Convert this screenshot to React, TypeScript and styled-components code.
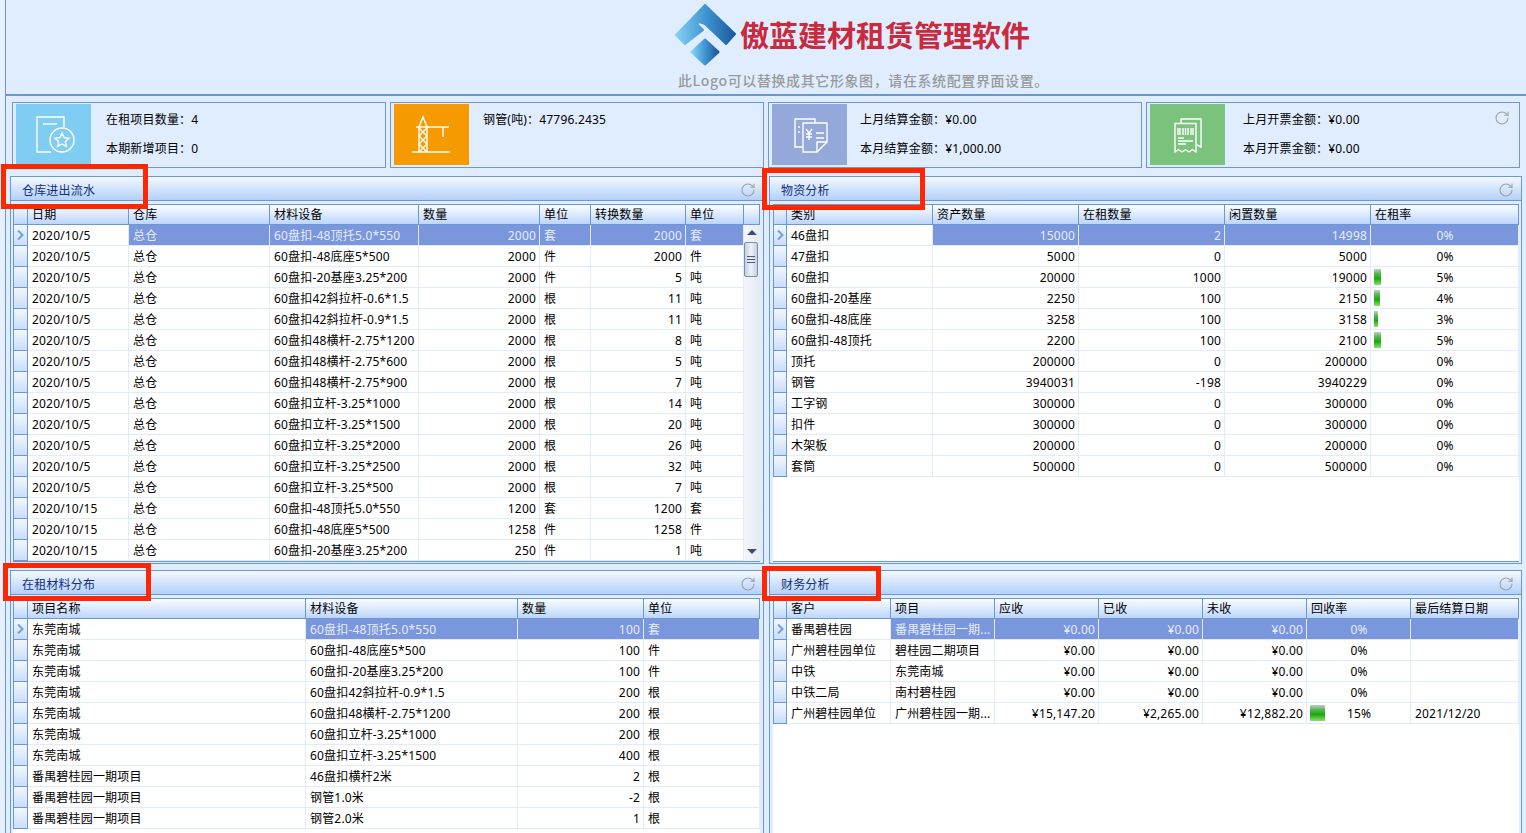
import styled, { createGlobalStyle } from "styled-components";
import { RotateCw } from "lucide-react";

const FONT = `"Noto Sans", "Noto Sans CJK SC", sans-serif`;
const LINE = "#6b97d4";
const CELL_LINE = "#e0ebff";

const Global = createGlobalStyle`
	html, body {
		margin: 0;
		height: 833px;
		overflow: hidden;
		background: #e6f0ff;
	}
	* { box-sizing: border-box; }
`;

const Page = styled.div`
	position: relative;
	width: 1526px;
	height: 833px;
	overflow: hidden;
	padding-left: 5px;
	font-family: ${FONT};
	font-size: 12px;
	letter-spacing: 0.18px;
	color: #000;
`;

const Main = styled.div`
	height: 100%;
	border-left: 1px solid ${LINE};
	background: #e0edff;
`;

const Header = styled.div`
	height: 96px;
	padding: 3px 0 0 668px;
	border-bottom: 2px solid ${LINE};
`;

const LogoRow = styled.div`
	display: flex;
	align-items: center;
	gap: 3px;
	height: 62px;
`;

const LogoMark = styled.svg`
	flex: none;
	margin-top: 2px;
`;

const LogoTitle = styled.div`
	font-family: "Noto Sans CJK SC", sans-serif;
	font-size: 29px;
	font-weight: 700;
	letter-spacing: 0;
	color: #c92a3e;
	white-space: nowrap;
`;

const LogoHint = styled.div`
	margin: 5px 0 0 4px;
	font-family: "Noto Sans CJK SC", sans-serif;
	font-size: 14px;
	font-weight: 500;
	line-height: 20px;
	letter-spacing: 0.6px;
	color: #999;
	white-space: nowrap;
`;

const Cards = styled.div`
	display: grid;
	grid-template-columns: repeat(4, 374px);
	gap: 4px;
	margin: 6px 0 8px 6px;
`;

const Card = styled.div`
	display: flex;
	height: 66px;
	padding: 1px 3px;
	border: 1px solid ${LINE};
`;

const CardIcon = styled.div<{ $bg: string }>`
	display: flex;
	flex: none;
	width: 75px;
	height: 61px;
	background: ${(p) => p.$bg};
`;

const CardText = styled.div<{ $gap: number }>`
	display: flex;
	flex-direction: column;
	gap: 15px;
	padding: 9px 0 0 ${(p) => p.$gap}px;
	line-height: 14px;
	white-space: nowrap;
`;

const CardRefresh = styled.div`
	margin: 6px 6px 0 auto;
	color: #a0a0a0;
`;

const Panels = styled.div`
	display: grid;
	grid-template-columns: 754px 753px;
	grid-template-rows: 388px 300px;
	column-gap: 5px;
	row-gap: 6px;
	margin-left: 4px;
`;

const Panel = styled.section<{ $inset: number }>`
	display: flex;
	flex-direction: column;
	min-height: 0;
	border: 1px solid ${LINE};
	padding-left: ${(p) => p.$inset}px;
`;

const PanelTitle = styled.div<{ $inset: number }>`
	display: flex;
	flex: none;
	align-items: center;
	justify-content: space-between;
	height: 24px;
	margin: 0 0 3px -${(p) => p.$inset}px;
	padding: 2px 7px 0 11px;
	background: linear-gradient(#f4f8ff, #b2d1fb);
	border-bottom: 1px solid ${LINE};
	color: #14307a;
`;

const RefreshBtn = styled.span`
	display: flex;
	color: #a0a0a0;
`;

const Grid = styled.div<{ $cols: string }>`
	--cols: ${(p) => p.$cols};
	flex: 1;
	align-self: flex-start;
	display: flex;
	flex-direction: column;
	min-height: 0;
	margin-bottom: 1px;
	overflow: hidden;
	background: #fff;
	border-bottom: 1px solid ${LINE};
`;

const HeadRow = styled.div`
	display: grid;
	flex: none;
	grid-template-columns: var(--cols);
	height: 21px;
	background: linear-gradient(#fbfdff, #bcd6fb);
	border: solid ${LINE};
	border-width: 1px 0 1px 1px;
`;

const HeadCell = styled.div`
	padding: 0 3px 0 4px;
	line-height: 19px;
	border-right: 1px solid ${LINE};
	white-space: nowrap;
	overflow: hidden;
`;

const Body = styled.div`
	display: flex;
	flex: 1;
	min-height: 0;
`;

const Rows = styled.div`
	flex: 1;
	min-width: 0;
`;

const Row = styled.div`
	display: grid;
	grid-template-columns: var(--cols);
	height: 21px;
	border-left: 1px solid ${LINE};
`;

const Indicator = styled.div`
	display: flex;
	align-items: center;
	justify-content: center;
	background: linear-gradient(#f2f7ff, #c9ddfb);
	border-right: 1px solid ${LINE};
	border-bottom: 1px solid ${LINE};
	color: #6f9fdf;
`;

const Cell = styled.div<{ $align?: string; $selected?: boolean }>`
	position: relative;
	padding: 1px 3px 0 4px;
	line-height: 20px;
	text-align: ${(p) => p.$align ?? "left"};
	white-space: nowrap;
	overflow: hidden;
	color: ${(p) => (p.$selected ? "#e6ecfb" : "#000")};
	background: ${(p) => (p.$selected ? "#7a96dc" : "#fff")};
	border-right: 1px solid ${CELL_LINE};
	border-bottom: 1px solid ${CELL_LINE};
`;

const Clipped = styled.span`
	display: block;
	overflow: hidden;
	white-space: nowrap;
	text-overflow: clip;
`;

const RateBar = styled.span<{ $pct: number }>`
	position: absolute;
	left: 3px;
	top: 2px;
	bottom: 2px;
	width: ${(p) => p.$pct}%;
	background: linear-gradient(#c4cfc4 0%, #58b858 28%, #1aa80e 60%, #8fe070 100%);
`;

const RateText = styled.span`
	position: relative;
`;

const Scroll = styled.div`
	display: flex;
	flex: none;
	flex-direction: column;
	align-items: center;
	width: 16px;
	height: 336px;
	margin-left: -16px;
	background: linear-gradient(90deg, #f4f6fa, #e6eaf2);
`;

const ScrollArrow = styled.div<{ $down?: boolean }>`
	flex: none;
	width: 0;
	height: 0;
	margin: 5px 0 7px;
	border-left: 5px solid transparent;
	border-right: 5px solid transparent;
	${(p) => (p.$down ? "border-top: 5px solid #3c4c70;" : "border-bottom: 5px solid #3c4c70;")}
`;

const ScrollThumb = styled.div`
	display: flex;
	flex: none;
	align-items: center;
	justify-content: center;
	width: 14px;
	height: 35px;
	margin-right: 2px;
	background: linear-gradient(90deg, #c4cfe0, #eef2f8 50%, #c4cfe0);
	border: 1px solid #7a8bb0;
	border-radius: 2px;
`;

const ThumbGrip = styled.div`
	width: 8px;
	height: 8px;
	background: repeating-linear-gradient(#4a5a80 0 1px, transparent 1px 3px);
`;

const ScrollSpace = styled.div`
	flex: 1;
`;

const RedBox = styled.div<{ $x: number; $y: number; $w: number; $h: number }>`
	position: absolute;
	left: ${(p) => p.$x}px;
	top: ${(p) => p.$y}px;
	width: ${(p) => p.$w}px;
	height: ${(p) => p.$h}px;
	border: 5px solid #ff2600;
	pointer-events: none;
`;

function Logo() {
	return (
		<LogoMark width="63" height="62" viewBox="0 0 63 62">
			<defs>
				<linearGradient id="logoA" x1="0" y1="0" x2="1" y2="0">
					<stop offset="0" stopColor="#84d0f6" />
					<stop offset="0.5" stopColor="#3f94d2" />
					<stop offset="1" stopColor="#1c5a9c" />
				</linearGradient>
			</defs>
			<path
				d="M31 1 L61 30 L52 40 L31 20 L25 18 L23 20 L29 26 L11 40 L2 31 Z"
				fill="url(#logoA)"
				stroke="url(#logoA)"
				strokeWidth="2"
				strokeLinejoin="round"
			/>
			<path
				d="M31 36 L44 48 L31 60 L18 48 Z"
				fill="url(#logoA)"
				stroke="url(#logoA)"
				strokeWidth="3"
				strokeLinejoin="round"
			/>
		</LogoMark>
	);
}

const white = { fill: "none", stroke: "#fff", strokeWidth: 1.4 };

function ProjectIcon() {
	return (
		<svg width="75" height="61" viewBox="0 0 75 61">
			<g {...white}>
				<path d="M35 48 H21 V13 H48 V23" />
				<path d="M27 20 H41" />
				<circle cx="46" cy="36" r="12" />
				<path d="M46 29 L48 33.6 L53 34.2 L49.3 37.6 L50.3 42.4 L46 40 L41.7 42.4 L42.7 37.6 L39 34.2 L44 33.6 Z" />
			</g>
		</svg>
	);
}

function CraneIcon() {
	return (
		<svg width="75" height="61" viewBox="0 0 75 61">
			<g {...white}>
				<path d="M18 48 H56" />
				<path d="M22 23 H55" />
				<path d="M49 23 V33" />
				<path d="M25 48 V23 L29 13 L33 23 V48" />
				<path d="M25 24 L33 32 L25 40 L33 48 M33 24 L25 32 L33 40 L25 48" />
			</g>
		</svg>
	);
}

function SettleIcon() {
	return (
		<svg width="75" height="61" viewBox="0 0 75 61">
			<g {...white}>
				<path d="M31 43 H23 V15 H43 V19" />
				<path d="M31 19 H55 V38 L45 48 H31 Z" />
				<path d="M45 48 V38 H55" />
				<path d="M44 29 H52 M44 34 H52" />
				<path d="M34 25 L37 29 L40 25 M37 29 V36 M34 30 H40 M34 33 H40" />
				<path d="M27 22 V24 M27 27 V29" />
			</g>
		</svg>
	);
}

function InvoiceIcon() {
	return (
		<svg width="75" height="61" viewBox="0 0 75 61">
			<g {...white}>
				<path d="M31 19 V15 H51 V43 L47 41" />
				<path d="M25 48 V19.5 H46 V48 L42.5 45.5 L39 48 L35.5 45.5 L32 48 L28.5 45.5 Z" />
				<path d="M28 24 V31 M30 24 V31 M33 24 V31 M35.5 24 V31 M38 24 V31 M41 24 V31 M43 24 V31" />
				<path d="M28 34 H34 M28 37 H43 M28 40 H36" />
			</g>
		</svg>
	);
}

function Chevron() {
	return (
		<svg width="7" height="10" viewBox="0 0 7 10">
			<path d="M1 0.5 L5.5 5 L1 9.5" fill="none" stroke="currentColor" strokeWidth="2" />
		</svg>
	);
}

type Col = { title: string; align?: string };
type Value = string | { pct: number; text: string };

function DataGrid(props: {
	cols: string;
	columns: Col[];
	rows: Value[][];
	filler?: boolean;
	scroll?: boolean;
}) {
	const { cols, columns, rows, filler, scroll } = props;
	return (
		<Grid $cols={cols}>
			<HeadRow>
				<HeadCell />
				{columns.map((c, i) => (
					<HeadCell key={i}>{c.title}</HeadCell>
				))}
				{filler && <HeadCell />}
			</HeadRow>
			<Body>
				<Rows>
					{rows.map((row, r) => (
						<Row key={r}>
							<Indicator>{r === 0 && <Chevron />}</Indicator>
							{row.map((v, c) => (
								<Cell key={c} $align={columns[c].align} $selected={r === 0 && c > 0}>
									{typeof v === "string" ? (
										<Clipped>{v}</Clipped>
									) : (
										<>
											{v.pct > 0 && <RateBar $pct={v.pct} />}
											<RateText>{v.text}</RateText>
										</>
									)}
								</Cell>
							))}
						</Row>
					))}
				</Rows>
				{scroll && (
					<Scroll>
						<ScrollArrow />
						<ScrollThumb>
							<ThumbGrip />
						</ScrollThumb>
						<ScrollSpace />
						<ScrollArrow $down />
					</Scroll>
				)}
			</Body>
		</Grid>
	);
}

const flowRows: Value[][] = [
	["2020/10/5", "总仓", "60盘扣-48顶托5.0*550", "2000", "套", "2000", "套"],
	["2020/10/5", "总仓", "60盘扣-48底座5*500", "2000", "件", "2000", "件"],
	["2020/10/5", "总仓", "60盘扣-20基座3.25*200", "2000", "件", "5", "吨"],
	["2020/10/5", "总仓", "60盘扣42斜拉杆-0.6*1.5", "2000", "根", "11", "吨"],
	["2020/10/5", "总仓", "60盘扣42斜拉杆-0.9*1.5", "2000", "根", "11", "吨"],
	["2020/10/5", "总仓", "60盘扣48横杆-2.75*1200", "2000", "根", "8", "吨"],
	["2020/10/5", "总仓", "60盘扣48横杆-2.75*600", "2000", "根", "5", "吨"],
	["2020/10/5", "总仓", "60盘扣48横杆-2.75*900", "2000", "根", "7", "吨"],
	["2020/10/5", "总仓", "60盘扣立杆-3.25*1000", "2000", "根", "14", "吨"],
	["2020/10/5", "总仓", "60盘扣立杆-3.25*1500", "2000", "根", "20", "吨"],
	["2020/10/5", "总仓", "60盘扣立杆-3.25*2000", "2000", "根", "26", "吨"],
	["2020/10/5", "总仓", "60盘扣立杆-3.25*2500", "2000", "根", "32", "吨"],
	["2020/10/5", "总仓", "60盘扣立杆-3.25*500", "2000", "根", "7", "吨"],
	["2020/10/15", "总仓", "60盘扣-48顶托5.0*550", "1200", "套", "1200", "套"],
	["2020/10/15", "总仓", "60盘扣-48底座5*500", "1258", "件", "1258", "件"],
	["2020/10/15", "总仓", "60盘扣-20基座3.25*200", "250", "件", "1", "吨"],
];

const rate = (pct: number) => ({ pct, text: `${pct}%` });

const stockRows: Value[][] = [
	["46盘扣", "15000", "2", "14998", rate(0)],
	["47盘扣", "5000", "0", "5000", rate(0)],
	["60盘扣", "20000", "1000", "19000", rate(5)],
	["60盘扣-20基座", "2250", "100", "2150", rate(4)],
	["60盘扣-48底座", "3258", "100", "3158", rate(3)],
	["60盘扣-48顶托", "2200", "100", "2100", rate(5)],
	["顶托", "200000", "0", "200000", rate(0)],
	["钢管", "3940031", "-198", "3940229", rate(0)],
	["工字钢", "300000", "0", "300000", rate(0)],
	["扣件", "300000", "0", "300000", rate(0)],
	["木架板", "200000", "0", "200000", rate(0)],
	["套筒", "500000", "0", "500000", rate(0)],
];

const rentRows: Value[][] = [
	["东莞南城", "60盘扣-48顶托5.0*550", "100", "套"],
	["东莞南城", "60盘扣-48底座5*500", "100", "件"],
	["东莞南城", "60盘扣-20基座3.25*200", "100", "件"],
	["东莞南城", "60盘扣42斜拉杆-0.9*1.5", "200", "根"],
	["东莞南城", "60盘扣48横杆-2.75*1200", "200", "根"],
	["东莞南城", "60盘扣立杆-3.25*1000", "200", "根"],
	["东莞南城", "60盘扣立杆-3.25*1500", "400", "根"],
	["番禺碧桂园一期项目", "46盘扣横杆2米", "2", "根"],
	["番禺碧桂园一期项目", "钢管1.0米", "-2", "根"],
	["番禺碧桂园一期项目", "钢管2.0米", "1", "根"],
];

const financeRows: Value[][] = [
	["番禺碧桂园", "番禺碧桂园一期...", "¥0.00", "¥0.00", "¥0.00", rate(0), ""],
	["广州碧桂园单位", "碧桂园二期项目", "¥0.00", "¥0.00", "¥0.00", rate(0), ""],
	["中铁", "东莞南城", "¥0.00", "¥0.00", "¥0.00", rate(0), ""],
	["中铁二局", "南村碧桂园", "¥0.00", "¥0.00", "¥0.00", rate(0), ""],
	["广州碧桂园单位", "广州碧桂园一期...", "¥15,147.20", "¥2,265.00", "¥12,882.20", rate(15), "2021/12/20"],
];

export default function App() {
	return (
		<Page>
			<Global />
			<Main>
				<Header>
					<LogoRow>
						<Logo />
						<LogoTitle>傲蓝建材租赁管理软件</LogoTitle>
					</LogoRow>
					<LogoHint>此Logo可以替换成其它形象图，请在系统配置界面设置。</LogoHint>
				</Header>

				<Cards>
					<Card>
						<CardIcon $bg="#7fcdf3">
							<ProjectIcon />
						</CardIcon>
						<CardText $gap={15}>
							<span>在租项目数量：4</span>
							<span>本期新增项目：0</span>
						</CardText>
					</Card>
					<Card>
						<CardIcon $bg="#f59a00">
							<CraneIcon />
						</CardIcon>
						<CardText $gap={14}>
							<span>钢管(吨)：47796.2435</span>
						</CardText>
					</Card>
					<Card>
						<CardIcon $bg="#95a8da">
							<SettleIcon />
						</CardIcon>
						<CardText $gap={13}>
							<span>上月结算金额：¥0.00</span>
							<span>本月结算金额：¥1,000.00</span>
						</CardText>
					</Card>
					<Card>
						<CardIcon $bg="#7bc27c">
							<InvoiceIcon />
						</CardIcon>
						<CardText $gap={18}>
							<span>上月开票金额：¥0.00</span>
							<span>本月开票金额：¥0.00</span>
						</CardText>
						<CardRefresh>
							<RotateCw size={16} strokeWidth={1.6} />
						</CardRefresh>
					</Card>
				</Cards>

				<Panels>
					<Panel $inset={2}>
						<PanelTitle $inset={2}>
							仓库进出流水
							<RefreshBtn>
								<RotateCw size={16} strokeWidth={1.6} />
							</RefreshBtn>
						</PanelTitle>
						<DataGrid
							cols="14px 101px 141px 149px 121px 51px 95px 58px 16px"
							columns={[
								{ title: "日期" },
								{ title: "仓库" },
								{ title: "材料设备" },
								{ title: "数量", align: "right" },
								{ title: "单位" },
								{ title: "转换数量", align: "right" },
								{ title: "单位" },
							]}
							rows={flowRows}
							filler
							scroll
						/>
					</Panel>

					<Panel $inset={3}>
						<PanelTitle $inset={3}>
							物资分析
							<RefreshBtn>
								<RotateCw size={16} strokeWidth={1.6} />
							</RefreshBtn>
						</PanelTitle>
						<DataGrid
							cols="13px 146px 146px 146px 146px 148px"
							columns={[
								{ title: "类别" },
								{ title: "资产数量", align: "right" },
								{ title: "在租数量", align: "right" },
								{ title: "闲置数量", align: "right" },
								{ title: "在租率", align: "center" },
							]}
							rows={stockRows}
						/>
					</Panel>

					<Panel $inset={2}>
						<PanelTitle $inset={2}>
							在租材料分布
							<RefreshBtn>
								<RotateCw size={16} strokeWidth={1.6} />
							</RefreshBtn>
						</PanelTitle>
						<DataGrid
							cols="14px 278px 212px 126px 116px"
							columns={[
								{ title: "项目名称" },
								{ title: "材料设备" },
								{ title: "数量", align: "right" },
								{ title: "单位" },
							]}
							rows={rentRows}
						/>
					</Panel>

					<Panel $inset={3}>
						<PanelTitle $inset={3}>
							财务分析
							<RefreshBtn>
								<RotateCw size={16} strokeWidth={1.6} />
							</RefreshBtn>
						</PanelTitle>
						<DataGrid
							cols="13px 104px 104px 104px 104px 104px 104px 108px"
							columns={[
								{ title: "客户" },
								{ title: "项目" },
								{ title: "应收", align: "right" },
								{ title: "已收", align: "right" },
								{ title: "未收", align: "right" },
								{ title: "回收率", align: "center" },
								{ title: "最后结算日期" },
							]}
							rows={financeRows}
						/>
					</Panel>
				</Panels>
			</Main>

			<RedBox $x={1} $y={164} $w={147} $h={45} />
			<RedBox $x={762} $y={168} $w={163} $h={42} />
			<RedBox $x={3} $y={563} $w={148} $h={38} />
			<RedBox $x={762} $y={566} $w={119} $h={35} />
		</Page>
	);
}
